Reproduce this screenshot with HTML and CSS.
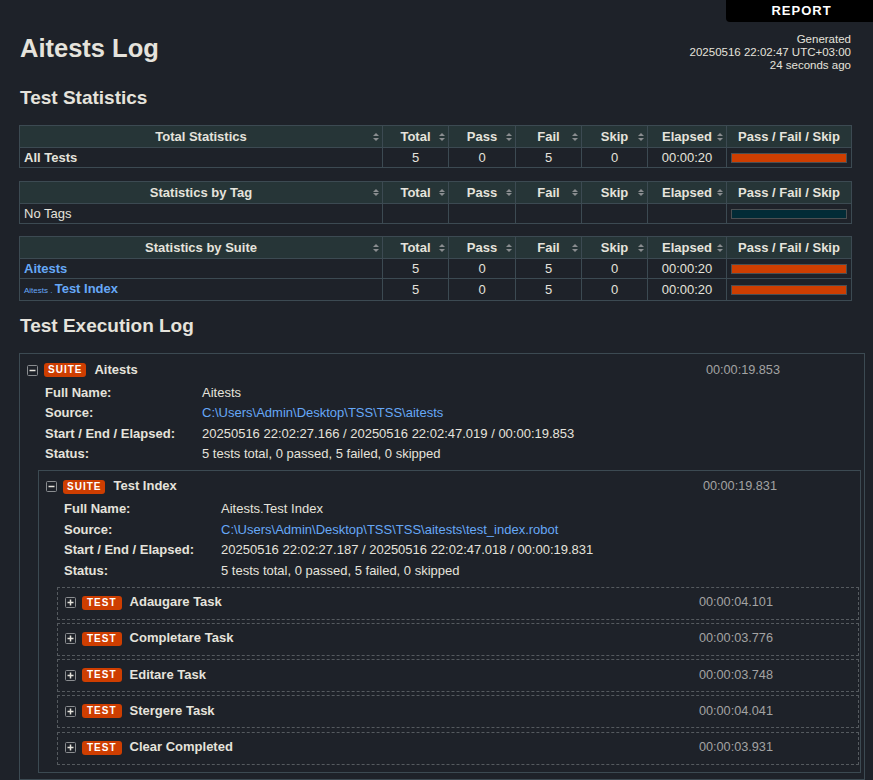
FILE: index.html
```html
<!DOCTYPE html>
<html lang="en">
<head>
<meta charset="utf-8">
<title>Aitests Log</title>
<link rel="stylesheet" href="styles.css">
</head>
<body>
<div class="report-tab">REPORT</div>
<header class="top">
  <h1>Aitests Log</h1>
  <div class="generated">Generated<br>20250516 22:02:47 UTC+03:00<br>24 seconds ago</div>
</header>

<h2 class="h2-stats">Test Statistics</h2>

<table class="stats">
  <colgroup><col class="c-name"><col class="c-total"><col class="c-pass"><col class="c-fail"><col class="c-skip"><col class="c-elapsed"><col class="c-graph"></colgroup>
  <thead><tr><th class="sortable">Total Statistics</th><th class="sortable">Total</th><th class="sortable">Pass</th><th class="sortable">Fail</th><th class="sortable">Skip</th><th class="sortable">Elapsed</th><th>Pass / Fail / Skip</th></tr></thead>
  <tbody><tr><td class="name strong">All Tests</td><td>5</td><td>0</td><td>5</td><td>0</td><td>00:00:20</td><td class="graph"><div class="bar fail"></div></td></tr></tbody>
</table>

<table class="stats">
  <colgroup><col class="c-name"><col class="c-total"><col class="c-pass"><col class="c-fail"><col class="c-skip"><col class="c-elapsed"><col class="c-graph"></colgroup>
  <thead><tr><th class="sortable">Statistics by Tag</th><th class="sortable">Total</th><th class="sortable">Pass</th><th class="sortable">Fail</th><th class="sortable">Skip</th><th class="sortable">Elapsed</th><th>Pass / Fail / Skip</th></tr></thead>
  <tbody><tr><td class="name">No Tags</td><td></td><td></td><td></td><td></td><td></td><td class="graph"><div class="bar empty"></div></td></tr></tbody>
</table>

<table class="stats">
  <colgroup><col class="c-name"><col class="c-total"><col class="c-pass"><col class="c-fail"><col class="c-skip"><col class="c-elapsed"><col class="c-graph"></colgroup>
  <thead><tr><th class="sortable">Statistics by Suite</th><th class="sortable">Total</th><th class="sortable">Pass</th><th class="sortable">Fail</th><th class="sortable">Skip</th><th class="sortable">Elapsed</th><th>Pass / Fail / Skip</th></tr></thead>
  <tbody>
    <tr><td class="name"><a class="strong" href="#s1">Aitests</a></td><td>5</td><td>0</td><td>5</td><td>0</td><td>00:00:20</td><td class="graph"><div class="bar fail"></div></td></tr>
    <tr><td class="name"><a href="#s1-s1"><span class="parent-name">Aitests . </span><span class="strong">Test Index</span></a></td><td>5</td><td>0</td><td>5</td><td>0</td><td>00:00:20</td><td class="graph"><div class="bar fail"></div></td></tr>
  </tbody>
</table>

<h2 class="h2-log">Test Execution Log</h2>

<div class="log">
  <div class="suite" id="s1">
    <div class="el-head">
      <svg class="toggle" width="11" height="11" viewBox="0 0 11 11"><rect x="0.5" y="0.5" width="10" height="10" rx="1" fill="#1e2229" stroke="#8a8d90"/><path d="M2.5 5.5h6" stroke="#e5e3dc" stroke-width="1.5"/></svg>
      <span class="label">SUITE</span>
      <span class="el-name">Aitests</span>
      <span class="elapsed">00:00:19.853</span>
    </div>
    <div class="meta">
      <div class="k">Full Name:</div><div>Aitests</div>
      <div class="k">Source:</div><div><a href="#src1">C:\Users\Admin\Desktop\TSS\TSS\aitests</a></div>
      <div class="k">Start / End / Elapsed:</div><div>20250516 22:02:27.166 / 20250516 22:02:47.019 / 00:00:19.853</div>
      <div class="k">Status:</div><div>5 tests total, 0 passed, 5 failed, 0 skipped</div>
    </div>

    <div class="suite child" id="s1-s1">
      <div class="el-head head-child">
        <svg class="toggle" width="11" height="11" viewBox="0 0 11 11"><rect x="0.5" y="0.5" width="10" height="10" rx="1" fill="#1e2229" stroke="#8a8d90"/><path d="M2.5 5.5h6" stroke="#e5e3dc" stroke-width="1.5"/></svg>
        <span class="label">SUITE</span>
        <span class="el-name">Test Index</span>
        <span class="elapsed">00:00:19.831</span>
      </div>
      <div class="meta">
        <div class="k">Full Name:</div><div>Aitests.Test Index</div>
        <div class="k">Source:</div><div><a href="#src2">C:\Users\Admin\Desktop\TSS\TSS\aitests\test_index.robot</a></div>
        <div class="k">Start / End / Elapsed:</div><div>20250516 22:02:27.187 / 20250516 22:02:47.018 / 00:00:19.831</div>
        <div class="k">Status:</div><div>5 tests total, 0 passed, 5 failed, 0 skipped</div>
      </div>

      <div class="tests">
        <div class="test">
          <div class="el-head head-test">
            <svg class="toggle" width="11" height="11" viewBox="0 0 11 11"><rect x="0.5" y="0.5" width="10" height="10" rx="1" fill="#1e2229" stroke="#8a8d90"/><path d="M2.5 5.5h6M5.5 2.5v6" stroke="#e5e3dc" stroke-width="1.5"/></svg>
            <span class="label label-test">TEST</span>
            <span class="el-name">Adaugare Task</span>
            <span class="elapsed">00:00:04.101</span>
          </div>
        </div>
        <div class="test">
          <div class="el-head head-test">
            <svg class="toggle" width="11" height="11" viewBox="0 0 11 11"><rect x="0.5" y="0.5" width="10" height="10" rx="1" fill="#1e2229" stroke="#8a8d90"/><path d="M2.5 5.5h6M5.5 2.5v6" stroke="#e5e3dc" stroke-width="1.5"/></svg>
            <span class="label label-test">TEST</span>
            <span class="el-name">Completare Task</span>
            <span class="elapsed">00:00:03.776</span>
          </div>
        </div>
        <div class="test">
          <div class="el-head head-test">
            <svg class="toggle" width="11" height="11" viewBox="0 0 11 11"><rect x="0.5" y="0.5" width="10" height="10" rx="1" fill="#1e2229" stroke="#8a8d90"/><path d="M2.5 5.5h6M5.5 2.5v6" stroke="#e5e3dc" stroke-width="1.5"/></svg>
            <span class="label label-test">TEST</span>
            <span class="el-name">Editare Task</span>
            <span class="elapsed">00:00:03.748</span>
          </div>
        </div>
        <div class="test">
          <div class="el-head head-test">
            <svg class="toggle" width="11" height="11" viewBox="0 0 11 11"><rect x="0.5" y="0.5" width="10" height="10" rx="1" fill="#1e2229" stroke="#8a8d90"/><path d="M2.5 5.5h6M5.5 2.5v6" stroke="#e5e3dc" stroke-width="1.5"/></svg>
            <span class="label label-test">TEST</span>
            <span class="el-name">Stergere Task</span>
            <span class="elapsed">00:00:04.041</span>
          </div>
        </div>
        <div class="test">
          <div class="el-head head-test">
            <svg class="toggle" width="11" height="11" viewBox="0 0 11 11"><rect x="0.5" y="0.5" width="10" height="10" rx="1" fill="#1e2229" stroke="#8a8d90"/><path d="M2.5 5.5h6M5.5 2.5v6" stroke="#e5e3dc" stroke-width="1.5"/></svg>
            <span class="label label-test">TEST</span>
            <span class="el-name">Clear Completed</span>
            <span class="elapsed">00:00:03.931</span>
          </div>
        </div>
      </div>
    </div>
  </div>
</div>
</body>
</html>
```

FILE: styles.css
```css
* { box-sizing: border-box; }
html, body { margin: 0; padding: 0; background: #1e2229; }
body {
  color: #e5e3dc;
  font-family: "Liberation Sans", Arial, Helvetica, sans-serif;
  font-size: 13px;
  line-height: 1.15;
}
a { color: #66a8f7; text-decoration: none; }
.strong { font-weight: bold; }

.report-tab {
  position: absolute;
  top: 0;
  right: 0;
  width: 147px;
  height: 22px;
  padding-left: 4px;
  background: #000;
  color: #fff;
  font-weight: bold;
  font-size: 13px;
  letter-spacing: 1px;
  line-height: 21px;
  text-align: center;
  border-bottom-left-radius: 4px;
}

.top {
  display: flex;
  justify-content: space-between;
  align-items: flex-start;
  padding: 33px 22px 0 20px;
}
.top h1 { margin: 0; font-size: 25.5px; line-height: 30px; font-weight: bold; }
.generated { font-size: 11.5px; line-height: 12.85px; text-align: right; white-space: nowrap; }

h2 { margin: 0; padding-left: 20px; font-size: 19px; line-height: 22px; font-weight: bold; }
.h2-stats { margin-top: 15.5px; margin-bottom: 16px; }
.h2-log { margin-top: 14px; margin-bottom: 16px; }

.stats {
  border-collapse: collapse;
  table-layout: fixed;
  width: 832px;
  margin: 0 0 12.5px 19px;
}
.c-name { width: 363px; }
.c-total { width: 66px; }
.c-pass { width: 67px; }
.c-fail { width: 66px; }
.c-skip { width: 66px; }
.c-elapsed { width: 79px; }
.c-graph { width: 125px; }
.stats th, .stats td { border: 1px solid #3c4a52; padding: 0 4px; white-space: nowrap; overflow: hidden; }
.stats th {
  background: #263537;
  font-weight: bold;
  text-align: center;
  line-height: 21px;
  position: relative;
}
.stats td { line-height: 19px; text-align: center; }
.stats td.name { text-align: left; }
.sortable::before, .sortable::after {
  content: "";
  position: absolute;
  right: 3px;
  width: 0;
  height: 0;
  border-left: 3.5px solid transparent;
  border-right: 3.5px solid transparent;
}
.sortable::before { top: 7px; border-bottom: 3.5px solid #8a8d90; }
.sortable::after { top: 11.5px; border-top: 3.5px solid #8a8d90; }
.stats td.graph { padding: 0 4px 0 4px; }
.bar { height: 10px; border: 1px solid #4b4f52; margin-top: 1px; }
.bar.fail { background: #ce3e01; }
.bar.empty { background: #022b36; }
.parent-name { font-size: 8px; }

.log { margin: 0 8px 0 19px; }
.suite { border: 1px solid #3c4a52; padding: 6px 3px 6px 0; }
.suite.child { margin: 4.5px 0 0 18px; padding: 6px 1px 7px 0; }

.el-head {
  display: flex;
  align-items: center;
  height: 20px;
  padding: 0 81px 0 7px;
}
.head-child { padding-right: 82px; }
.head-test { padding-right: 85px; }
.toggle { flex: none; display: block; margin-right: 6px; }
.label {
  flex: none;
  background: #ce3e01;
  color: #fff;
  font-weight: bold;
  font-size: 10px;
  letter-spacing: 1px;
  height: 14px;
  line-height: 14px;
  padding: 0 4px;
  border-radius: 3px;
  margin-right: 8px;
}
.label-test { padding: 0 5px; }
.el-name { font-weight: bold; }
.elapsed { margin-left: auto; font-size: 12.7px; color: #a3a3a3; }

.meta {
  display: grid;
  grid-template-columns: 157px 1fr;
  grid-auto-rows: 20.5px;
  align-items: center;
  margin: 3px 0 0 25px;
  white-space: nowrap;
}
.meta .k { font-weight: bold; }

.tests { margin: 5px 0 0 18px; }
.test { border: 1px dashed #555a5f; padding: 5px 0 6px 0; margin-top: 3.25px; }
.test:first-child { margin-top: 0; }
```
